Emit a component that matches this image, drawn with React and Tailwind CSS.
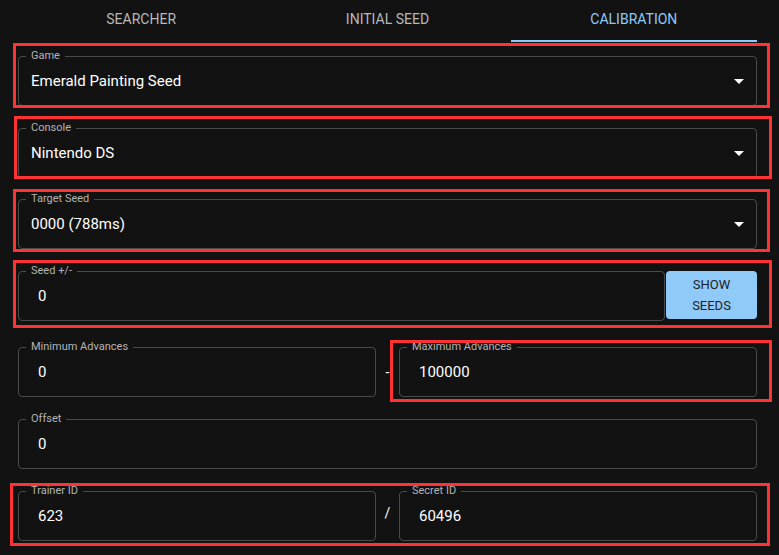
import { useState } from 'react';

const tabs = ['Searcher', 'Initial Seed', 'Calibration'];

// annotation boxes drawn over the form
const marks = [
  { left: 13, top: 43, width: 757, height: 65 },
  { left: 14, top: 116, width: 758, height: 63 },
  { left: 13, top: 189, width: 757, height: 63 },
  { left: 13, top: 260, width: 759, height: 68 },
  { left: 390, top: 340, width: 382, height: 62 },
  { left: 10, top: 483, width: 760, height: 63 },
];

const ArrowDropDown = () => (
  <svg viewBox="0 0 24 24" className="w-6 h-6 fill-white shrink-0">
    <path d="M7 10l5 5 5-5z" />
  </svg>
);

const Outlined = ({ label, children, className = '' }) => (
  <div className={`relative h-[50px] rounded border border-[#4a4a4a] flex items-center ${className}`}>
    <span className="absolute -top-[8px] left-[7px] px-[5px] bg-[#121212] text-[11px] leading-[14px] text-[#b4b4b4]">
      {label}
    </span>
    {children}
  </div>
);

const SelectField = ({ label, value }) => (
  <Outlined label={label} className="pl-[12px] pr-[5px] justify-between">
    <span className="text-[15px] text-white">{value}</span>
    <ArrowDropDown />
  </Outlined>
);

const NumberField = ({ label, value, className = '' }) => (
  <Outlined label={label} className={`pl-[19px] ${className}`}>
    <span className="text-[15px] text-white">{value}</span>
  </Outlined>
);

const App = () => {
  const [activeTab, setActiveTab] = useState(2);

  return (
    <div
      className="relative w-[779px] h-[555px] bg-[#121212] overflow-hidden"
      style={{ fontFamily: 'Roboto, "Liberation Sans", sans-serif' }}
    >
      <div className="pl-[18px] pr-[22px]">
        <div className="flex h-[42px]">
          {tabs.map((tab, i) => (
            <button
              key={tab}
              onClick={() => setActiveTab(i)}
              className={`flex-1 flex items-center justify-center pb-[2px] text-[14px] uppercase border-b-2 ${
                activeTab === i ? 'text-[#90caf9] border-[#90caf9]' : 'text-[#b8b8b8] border-transparent'
              }`}
            >
              {tab}
            </button>
          ))}
        </div>

        <div className="mt-[14px]">
          <SelectField label="Game" value="Emerald Painting Seed" />
        </div>
        <div className="mt-[22px]">
          <SelectField label="Console" value="Nintendo DS" />
        </div>
        <div className="mt-[21px]">
          <SelectField label="Target Seed" value="0000 (788ms)" />
        </div>

        <div className="mt-[22px] flex items-start gap-[1px]">
          <NumberField label="Seed +/-" value="0" className="flex-1" />
          <button className="w-[91px] h-[48px] rounded bg-[#90caf9] text-[#1e1e1e] text-[13px] leading-[21px] uppercase">
            Show
            <br />
            Seeds
          </button>
        </div>

        <div className="mt-[26px] grid grid-cols-[358px_1fr_358px] items-center">
          <NumberField label="Minimum Advances" value="0" />
          <span className="text-center text-white text-[14px]">-</span>
          <NumberField label="Maximum Advances" value="100000" />
        </div>

        <div className="mt-[22px]">
          <NumberField label="Offset" value="0" />
        </div>

        <div className="mt-[22px] grid grid-cols-[358px_1fr_358px] items-center">
          <NumberField label="Trainer ID" value="623" />
          <span className="text-center text-white text-[14px] -mt-[6px]">/</span>
          <NumberField label="Secret ID" value="60496" />
        </div>
      </div>

      {marks.map((m, i) => (
        <div
          key={i}
          className="absolute border-[3px] border-[#ff3333] pointer-events-none"
          style={m}
        />
      ))}
    </div>
  );
};

export default App;
